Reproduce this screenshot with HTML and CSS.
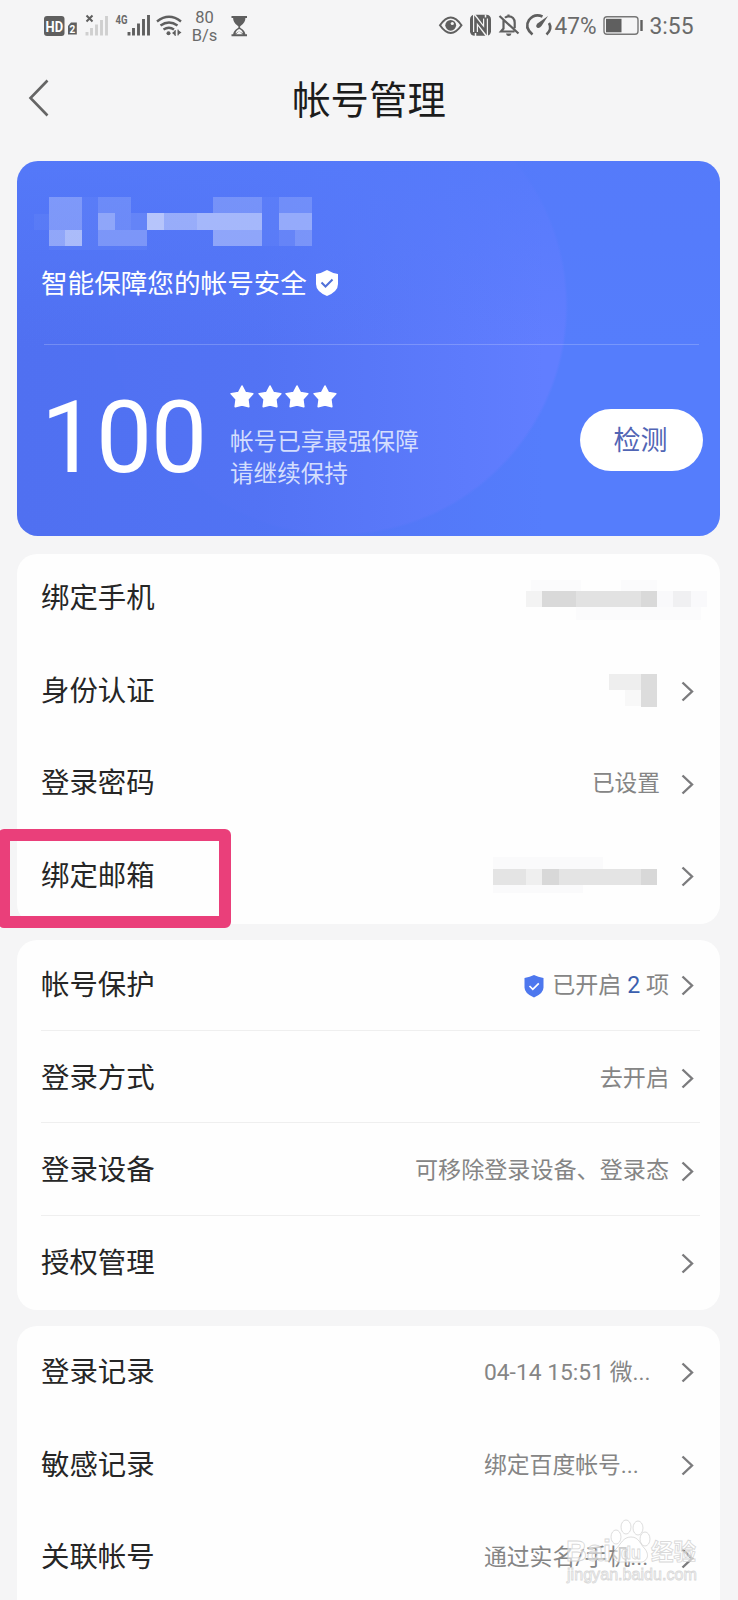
FILE: index.html
```
<!DOCTYPE html>
<html lang="zh-CN">
<head>
<meta charset="utf-8">
<title>帐号管理</title>
<link rel="stylesheet" href="styles.css">
</head>
<body>
<svg class="defs" width="0" height="0">
  <symbol id="chevron" viewBox="0 0 13 21"><path d="M1.5 1.5 11 10.5 1.5 19.5" fill="none" stroke="#7b7b7d" stroke-width="2.400"/></symbol>
  <symbol id="star" viewBox="0 0 24 23"><path d="M12 1 15.400 7.600 22.800 8.700 17.800 14.200 18.800 21.600 12 20 5.200 21.600 6.200 14.200 1.200 8.700 8.600 7.600Z" fill="#fff" stroke="#fff" stroke-width="1.600" stroke-linejoin="round"/></symbol>
</svg>
<div class="screen">
  <header class="status">
    <svg class="status-left" width="210" height="36" viewBox="40 8 210 36">
      <rect x="44" y="16" width="20.500" height="20" rx="3" fill="#5f5f5f"/>
      <text x="54.300" y="31.500" class="hd" textLength="17.500" lengthAdjust="spacingAndGlyphs">HD</text>
      <path d="M68 26l3-3.500h5.800V34.500H68Z" fill="#5f5f5f"/>
      <text x="72.400" y="33" class="sim">2</text>
      <path d="M86.500 15.500l6 6M92.500 15.500l-6 6" stroke="#5f5f5f" stroke-width="2"/>
      <path d="M87 32v3.500M91.500 28v7.500M96.500 24.500v11M101.500 20v15.500M106.500 16v19.500" stroke="#cfcfcf" stroke-width="2.900"/>
      <text x="115.500" y="24" class="net" textLength="12" lengthAdjust="spacingAndGlyphs">4G</text>
      <path d="M129 32v3.500M133.500 28v7.500M138.500 23.500v12M143.500 19v16.500M148.500 15v20.500" stroke="#5f5f5f" stroke-width="2.900"/>
      <g fill="none" stroke="#5f5f5f" stroke-width="2.400"><path d="M157 21.500q12-9.500 24 0M160.500 25.500q8.500-6 17 0M163.500 29.500q5.500-3.500 10.500 0"/></g>
      <circle cx="168.500" cy="33.200" r="2" fill="#5f5f5f"/>
      <path d="M172 33l3.200-2.500v5ZM181.500 32.500l-3.500-2.500v5Z" fill="#5f5f5f"/><path d="M175.200 30v6M178 29.500v6" stroke="#5f5f5f"/>
      <text x="204.500" y="23" class="rate">80</text>
      <text x="204.500" y="41.300" class="rate">B/s</text>
      <path d="M231.500 17h15.500M231.500 35.300h15.500" stroke="#5f5f5f" stroke-width="2"/>
      <path d="M233 17h12.500q0 6-5 9-1.300 1 0 2 5 2.500 5 7.500h-1.800l-4.500-4.500-4.500 4.500H233q0-5 5-7.500 1.300-1 0-2-5-3-5-9Z" fill="#5f5f5f"/>
      <path d="M235.500 33.500q.5-3.500 3.700-4.500 3.300 1 3.800 4.500l-3.800-2.300Z" fill="#f5f5f5"/>
    </svg>
    <svg class="status-right" width="260" height="36" viewBox="435 8 260 36">
      <path d="M440 25.300q10.700-15.500 21.500 0-10.800 15.500-21.500 0Z" fill="none" stroke="#5f5f5f" stroke-width="2"/>
      <circle cx="450.700" cy="25.300" r="5.400" fill="#5f5f5f"/><circle cx="452.300" cy="23.500" r="1.600" fill="#f5f5f5"/>
      <rect x="470" y="14.800" width="21" height="21" rx="4.500" fill="#5f5f5f"/>
      <path d="M475.500 32V18.500L485.500 32V18.500" fill="none" stroke="#f5f5f5" stroke-width="5"/>
      <path d="M475.500 32.500V19L485.500 31.500V18" fill="none" stroke="#5f5f5f" stroke-width="2.600"/>
      <path d="M475.500 36v-3M485.500 14.500v3" stroke="#f5f5f5" stroke-width="1.500"/>
      <g fill="none" stroke="#5f5f5f" stroke-width="2.200"><path d="M499.500 16l19 17.500M503.500 19.800V28.500l-2.500 3h13.500M505 17.800q1.500-1.500 3.500-1.500 6 0 6.200 6.500v5.500M508.500 14.500v2"/></g><path d="M506 33.500h5.500q-.5 2.500-2.800 2.500t-2.700-2.500" fill="#5f5f5f"/>
      <g fill="none" stroke="#5f5f5f" stroke-width="2.600"><path d="M532.500 34.500q-8.500-7-3.500-14.500 5.500-7 13.500-3.500M549 23q3.500 6-2.500 11.500"/></g>
      <path d="M548 16l-6.500 10q-2.500 3-4.500 1.500t.8-4.200Z" fill="#5f5f5f"/>
      <text x="554.500" y="33.500" class="clock" textLength="42" lengthAdjust="spacingAndGlyphs">47%</text>
      <rect x="604" y="16.800" width="34" height="17.500" rx="3" fill="none" stroke="#777" stroke-width="1.400"/>
      <rect x="606" y="18.800" width="15.500" height="13.500" fill="#5f5f5f"/>
      <path d="M641.500 20v11" stroke="#5f5f5f" stroke-width="2.400"/>
      <text x="649.500" y="33.500" class="clock" textLength="44" lengthAdjust="spacingAndGlyphs">3:55</text>
    </svg>
  </header>
  <nav class="nav">
    <svg class="back" width="22" height="38" viewBox="0 0 22 38"><path d="M19.500 1.500 2.500 19 19.500 36.500" fill="none" stroke="#656565" stroke-width="2.600"/></svg>
    <h1>帐号管理</h1>
  </nav>
  <main>
    <section class="hero">
      <svg class="mosaic" width="300" height="60" viewBox="30 190 300 60">
        <g fill="#fff">
          <path d="M49 197h33v33H49Z" opacity=".25"/><path d="M49 230h33v16H49Z" opacity=".36"/><path d="M65 230h17v16H65Z" opacity=".24"/>
          <path d="M98 197h33v33H98Z" opacity=".15"/><path d="M98 213h17v33H98Z" opacity=".24"/><path d="M115 230h32v16H115Z" opacity=".24"/><path d="M131 213h16v17H131Z" opacity=".1"/>
          <path d="M147 213h50v17H147Z" opacity=".4"/><path d="M147 213h17v17H147Z" opacity=".3"/><path d="M197 213h65v17H197Z" opacity=".48"/>
          <path d="M213 197h49v16H213Z" opacity=".2"/><path d="M213 230h49v16H213Z" opacity=".35"/><path d="M279 197h33v16H279Z" opacity=".17"/><path d="M279 213h33v17H279Z" opacity=".38"/><path d="M279 230h16v16H279Z" opacity=".1"/><path d="M295 230h17v16H295Z" opacity=".22"/>
          <path d="M34 214h15v16H34ZM82 197h16v49H82ZM49 246h98v8H49ZM262 197h17v49H262Z" opacity=".04"/>
        </g>
      </svg>
      <div class="slogan"><span>智能保障您的帐号安全</span>
        <svg width="24" height="28" viewBox="0 0 24 28"><path d="M12 1q5 3 11 4v10q0 7.500-11 12Q1 22.500 1 15V5Q7 4 12 1Z" fill="#fff"/><path d="M6.500 13.500l4 4 7-7" fill="none" stroke="#5070d8" stroke-width="2"/></svg>
      </div>
      <div class="score">
        <div class="num">100</div>
        <div class="info">
          <div class="stars"><svg><use href="#star"/></svg><svg><use href="#star"/></svg><svg><use href="#star"/></svg><svg><use href="#star"/></svg></div>
          <p>帐号已享最强保障<br>请继续保持</p>
        </div>
        <button class="check">检测</button>
      </div>
    </section>
    <section class="card">
      <div class="row"><span>绑定手机</span>
        <svg class="blur" width="184" height="44" viewBox="522 576 184 44"><path d="M525 591h17v16h-17Z" fill="#f3f3f3"/><path d="M541 591h115v16H541Z" fill="#e2e2e2"/><path d="M541 591h34v16h-34ZM640 591h16v16h-16Z" fill="#d9d9d9"/><path d="M656 591h50v16h-50Z" fill="#f9f9fb"/><path d="M672 591h18v16h-18Z" fill="#f0f0f2"/><path d="M530 580h50v11h-50ZM620 580h36v11h-36ZM575 607h125v14H575Z" fill="#fbfbfc"/></svg>
      </div>
      <div class="row"><span>身份认证</span><svg class="blur gap-wide" width="60" height="44" viewBox="600 668 60 44"><path d="M608 673h32v16h-32Z" fill="#eee"/><path d="M624 689h16v16h-16Z" fill="#f8f8f8"/><path d="M640 673h16v33h-16Z" fill="#dcdcdc"/></svg><svg class="go"><use href="#chevron"/></svg></div>
      <div class="row"><span>登录密码</span><em class="wide">已设置</em><svg class="go"><use href="#chevron"/></svg></div>
      <div class="row marked"><span>绑定邮箱</span><svg class="blur gap-wide" width="172" height="44" viewBox="488 855 172 44"><path d="M492 858h110v12H492ZM492 886h90v8h-90Z" fill="#fafafb"/><path d="M492 870h164v16H492Z" fill="#e4e4e4"/><path d="M525 870h16v16h-16Z" fill="#efefef"/><path d="M541 870h17v16h-17ZM640 870h16v16h-16Z" fill="#d8d8d8"/></svg><svg class="go"><use href="#chevron"/></svg></div>
    </section>
    <section class="card lined">
      <div class="row"><span>帐号保护</span><svg class="shield" width="20" height="24" viewBox="0 0 20 24"><path d="M10 1q4 2.200 9.500 3v9.500Q19.500 19.500 10 23.500.5 19.500.5 13.500V4Q6 3.200 10 1Z" fill="#4d77ee"/><path d="M5.500 12l3.300 3.300 6-6" fill="none" stroke="#fff" stroke-width="1.700"/></svg><em>已开启 <b>2</b> 项</em><svg class="go"><use href="#chevron"/></svg></div>
      <div class="row"><span>登录方式</span><em>去开启</em><svg class="go"><use href="#chevron"/></svg></div>
      <div class="row"><span>登录设备</span><em>可移除登录设备、登录态</em><svg class="go"><use href="#chevron"/></svg></div>
      <div class="row"><span>授权管理</span><svg class="go"><use href="#chevron"/></svg></div>
    </section>
    <section class="card last">
      <div class="row"><span>登录记录</span><em class="clip">04-14 15:51 微...</em><svg class="go"><use href="#chevron"/></svg></div>
      <div class="row"><span>敏感记录</span><em class="clip">绑定百度帐号...</em><svg class="go"><use href="#chevron"/></svg></div>
      <div class="row"><span>关联帐号</span><em class="clip">通过实名/手机...</em><svg class="go"><use href="#chevron"/></svg></div>
    </section>
  </main>
  <svg class="watermark" width="150" height="75" viewBox="560 1515 150 75">
    <g fill="#fff" fill-opacity=".6" stroke="#cfcfcf" stroke-opacity=".8" stroke-width=".9">
      <text x="566" y="1561" font-size="29" textLength="45" lengthAdjust="spacingAndGlyphs">Bai</text>
      <ellipse cx="616" cy="1537" rx="5" ry="7"/><ellipse cx="626" cy="1527" rx="5" ry="7"/><ellipse cx="638" cy="1528" rx="5" ry="7"/><ellipse cx="645" cy="1539" rx="5" ry="7"/>
      <path d="M631 1537c8 0 9 7 14 12 6 8 0 14-6 13h-17c-7 1-12-5-6-13 5-5 7-12 15-12Z"/>
      <text x="621" y="1559" font-size="18" textLength="20" lengthAdjust="spacingAndGlyphs">du</text>
      <text x="651" y="1560" font-size="23" textLength="45" lengthAdjust="spacingAndGlyphs">经验</text>
      <text x="567" y="1580" font-size="17" font-weight="400" textLength="130" lengthAdjust="spacingAndGlyphs">jingyan.baidu.com</text>
    </g>
  </svg>
</div>
</body>
</html>
```
FILE: styles.css
```
*, *::before, *::after { box-sizing: border-box; }
body { margin: 0; background: #f5f5f6; font-family: Roboto, "Noto Sans CJK SC", sans-serif; color: #262626; }
.defs { position: absolute; }
.screen { position: relative; width: 738px; height: 1600px; overflow: hidden; }
.status { height: 52px; padding: 8px 43px 0 40px; display: flex; justify-content: space-between; }
.status text { fill: #6a6a6a; }
.status .hd { font-size: 15px; font-weight: 700; fill: #fff; text-anchor: middle; }
.status .sim { font-size: 10px; font-weight: 700; fill: #fff; text-anchor: middle; }
.status .net { font-size: 13px; font-weight: 700; }
.status .rate { font-size: 16.5px; text-anchor: middle; }
.status .clock { font-size: 24px; font-weight: 400; }
.nav { height: 109px; padding: 0 28px; display: grid; grid-template-columns: 22px 1fr 22px; align-items: start; }
.back { margin-top: 27px; }
h1 { margin: 21px 0 0; text-align: center; font-size: 38.4px; line-height: 56px; font-weight: 400; color: #1c1c1c; }
main { padding: 0 18px 0 17px; display: flex; flex-direction: column; }
.hero { height: 375px; border-radius: 21px; padding: 29px 17px 0 24px; display: flex; flex-direction: column; overflow: hidden; color: #fff;
  background: linear-gradient(180deg, rgba(85,122,250,.85) 0, rgba(85,122,250,0) 50%), linear-gradient(90deg, #5070f1 0, rgba(80,113,242,.85) 35%, rgba(84,120,250,0) 75%), radial-gradient(circle 230px at 321px 145px, #617eff 0 227px, #557dfc 230px); }
.mosaic { margin-left: -11px; flex: none; }
.slogan { height: 95px; margin-right: 4px; margin-left: 3px; padding-top: 19px; display: flex; align-items: flex-start; gap: 8px; border-bottom: 1px solid rgba(255,255,255,.2); }
.slogan span { margin-left: -3px; font-size: 26.6px; line-height: 30px; }
.score { display: flex; align-items: flex-start; }
.num { width: 190px; margin-left: -1px; padding-top: 34px; padding-left: 1px; font-size: 100px; line-height: 117px; letter-spacing: -1.2px; }
.info { flex: 1; padding-top: 40px; }
.stars { display: flex; gap: 3.5px; height: 24px; }
.stars svg { width: 24px; height: 23px; }
.info p { margin: 17px 0 0; font-size: 23.6px; line-height: 32px; color: #d4defd; }
.check { margin-top: 64px; width: 123px; height: 62px; border: 0; border-radius: 31px; padding: 0 2px 3px 0; background: #fff; color: #5165b5; font: 27px "Noto Sans CJK SC", sans-serif; }
.card { margin-top: 16px; padding: 0 26px 0 24px; height: 370px; border-radius: 20px; background: #fefefe; }
.hero + .card { margin-top: 18px; height: 370px; }
.card.lined { padding-top: 1px; }
.card.last { height: 300px; padding-top: 2px; }
.row { position: relative; height: 92.7px; padding-bottom: 3px; display: flex; align-items: center; }
.row > span { margin-right: auto; font-size: 28.4px; line-height: 40px; }
.row em { font-style: normal; font-size: 23.1px; line-height: 32px; color: #858585; margin-right: 12px; white-space: pre; }
.row em.wide { font-size: 22.7px; margin-right: 21px; }
.row em.clip { width: 187px; margin-right: 10px; font-size: 22.8px; }
.row b { font-weight: 400; color: #3b5fae; }
.go { width: 13px; height: 21px; margin-top: 0; }
.blur { margin-right: -13px; margin-top: -2px; }
.gap-wide { margin-right: 20px; }
.shield { margin-right: 8px; }
.lined .row:not(:last-child)::after { content: ""; position: absolute; left: 0; right: -6px; bottom: 3px; height: 1px; background: #efefef; }
.marked::before { content: ""; position: absolute; left: -43px; top: -3px; width: 233px; height: 99px; border: 12px solid #ea3f7a; border-radius: 6px; }
.watermark { position: absolute; left: 560px; top: 1515px; font-family: "Liberation Sans", "Noto Sans CJK SC", sans-serif; font-weight: 700; }
```
